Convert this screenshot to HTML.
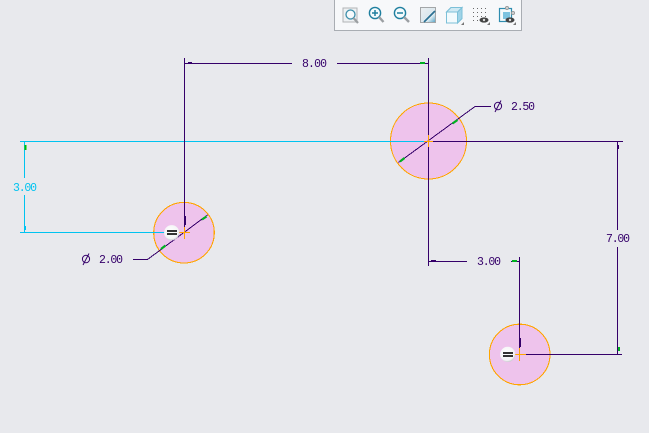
<!DOCTYPE html>
<html>
<head>
<meta charset="utf-8">
<style>
html,body{margin:0;padding:0;background:#e8e9ed;}
body{width:649px;height:433px;overflow:hidden;position:relative;}
svg{position:absolute;left:0;top:0;display:block;}
text{font-family:"Liberation Mono",monospace;font-size:11.5px;}
</style>
</head>
<body>
<svg width="649" height="433" viewBox="0 0 649 433" xmlns="http://www.w3.org/2000/svg">
<defs>
<linearGradient id="ds" x1="0" y1="0" x2="1" y2="1"><stop offset="0" stop-color="#eceff1"/><stop offset="0.5" stop-color="#dce8ee"/><stop offset="0.62" stop-color="#f4f8fa"/><stop offset="1" stop-color="#4f9fc2"/></linearGradient>
<radialGradient id="bd" cx="0.45" cy="0.4" r="0.65"><stop offset="0" stop-color="#ffffff"/><stop offset="0.75" stop-color="#f4f4f6"/><stop offset="1" stop-color="#b9b6c0"/></radialGradient>
</defs>

<!-- circles -->
<g fill="#eec3ec">
<circle cx="428.5" cy="141" r="38"/>
<circle cx="184" cy="232.7" r="30.3"/>
<circle cx="519.7" cy="354.5" r="30.3"/>
</g>
<g fill="none" stroke="#ffa500" stroke-width="1.1" shape-rendering="crispEdges">
<circle cx="428.5" cy="141" r="38"/>
<circle cx="184" cy="232.7" r="30.3"/>
<circle cx="519.7" cy="354.5" r="30.3"/>
</g>

<!-- cyan reference & dim -->
<g stroke="#00c3f0" stroke-width="1" shape-rendering="crispEdges" fill="none">
<path d="M20 141.5H426"/>
<path d="M20 232.5H166"/>
<path d="M24.5 142V178M24.5 195V232"/>
</g>
<rect x="24" y="226" width="2" height="4" fill="#00c3f0"/>
<rect x="24.5" y="145" width="2" height="5" fill="#00c000"/>

<!-- purple dims -->
<g stroke="#35006a" stroke-width="1" shape-rendering="crispEdges" fill="none">
<path d="M184.5 58V232"/>
<path d="M428.5 58V266"/>
<path d="M184 63.5H292M337 63.5H429"/>
<path d="M433 141.5H623"/>
<path d="M617.5 142V230M617.5 247V354"/>
<path d="M526 354.5H622"/>
<path d="M519.5 257V354"/>
<path d="M428 261.5H467M511 261.5H520"/>
<path d="M475 106.5H491"/>
<path d="M133 259.5H148"/>
<path d="M398.5 162.5L475 106.5"/>
<path d="M207.5 215L147.5 259.5"/>
</g>
<!-- thick ticks -->
<g fill="#35006a" shape-rendering="crispEdges">
<rect x="184" y="216" width="2" height="9"/>
<rect x="519" y="338" width="2" height="9"/>
<rect x="188" y="62" width="4" height="1"/>
<rect x="431" y="260" width="5" height="1"/>
<rect x="618" y="145" width="1" height="4"/>
</g>
<!-- green -->
<g fill="#00b020" shape-rendering="crispEdges">
<rect x="420" y="62" width="5" height="2"/>
<rect x="512" y="260" width="5" height="2"/>
<rect x="618" y="347" width="2" height="4"/>
</g>
<g stroke="#00b020" stroke-width="2.2" fill="none">
<path d="M452.5 123.5L457.5 120"/>
<path d="M400 161.5L404.5 158"/>
<path d="M202 219.5L206.5 216.5"/>
<path d="M161 249L165.5 245.5"/>
</g>

<!-- centre crosses -->
<g stroke="#ffa500" stroke-width="1" shape-rendering="crispEdges" fill="none">
<path d="M428.5 135V147M424 141.5H433"/>
<path d="M184.5 227V239M179 232.5H190"/>
<path d="M519.5 348V361M513 354.5H526"/>
</g>

<!-- badges -->
<circle cx="171.7" cy="232.7" r="7.6" fill="url(#bd)"/>
<circle cx="507.7" cy="354.4" r="7.6" fill="url(#bd)"/>
<g fill="#333" shape-rendering="crispEdges">
<rect x="167" y="230" width="10" height="2"/><rect x="167" y="233" width="10" height="2"/>
<rect x="503" y="352" width="10" height="2"/><rect x="503" y="355" width="10" height="2"/>
</g>

<!-- dimension text -->
<g fill="#35006a">
<text x="302" y="67" textLength="25">8.00</text>
<text x="477" y="265" textLength="24">3.00</text>
<text x="606" y="242" textLength="24">7.00</text>
<text x="511" y="110" textLength="24">2.50</text>
<text x="99" y="263" textLength="24">2.00</text>
</g>
<text x="13" y="191" textLength="24" fill="#00c3f0">3.00</text>
<g stroke="#35006a" stroke-width="1" fill="none">
<ellipse cx="498" cy="106" rx="3.6" ry="3.8"/><path d="M495 112L501 100.5"/>
<ellipse cx="86" cy="259" rx="3.6" ry="3.8"/><path d="M83 265L89 253.5"/>
</g>

<!-- toolbar -->
<rect x="334.5" y="-2" width="187" height="32.5" fill="#f7f8fa" stroke="#a9adb3"/>
<!-- zoom fit -->
<rect x="343" y="8" width="14" height="14" fill="#eef1f3" stroke="#b2b4b6"/>
<circle cx="350.5" cy="14.5" r="4.5" fill="#f6fafc" stroke="#3b8eaa" stroke-width="1.3"/>
<path d="M353.5 18L358 23" stroke="#9b9fa2" stroke-width="2.2"/>
<!-- zoom in -->
<circle cx="375" cy="13" r="5.6" fill="#f4fbfd" stroke="#1f7f9f" stroke-width="1.4"/>
<path d="M372 13H378M375 10V16" stroke="#1f7f9f" stroke-width="1.5"/>
<path d="M379 17L383.5 22" stroke="#9b9fa2" stroke-width="2.4"/>
<!-- zoom out -->
<circle cx="400" cy="13" r="5.6" fill="#f4fbfd" stroke="#1f7f9f" stroke-width="1.4"/>
<path d="M397 13H403" stroke="#1f7f9f" stroke-width="1.5"/>
<path d="M404 17L409 22" stroke="#9b9fa2" stroke-width="2.4"/>
<!-- display style -->
<rect x="420.5" y="7.5" width="15" height="15" fill="url(#ds)" stroke="#a3a6a8"/>
<path d="M424 22L435 11" stroke="#2a6f92" stroke-width="1.8"/>
<!-- cube -->
<path d="M446.5 12L451 7.5H462V18.5L457.5 23H446.5Z" fill="#f2fafd" stroke="#7cc0d8"/>
<path d="M457.5 12L462 7.5V18.5L457.5 23Z" fill="#9fd3e7" stroke="#7cc0d8"/>
<path d="M446.5 12L451 7.5H462L457.5 12Z" fill="#cfe9f3" stroke="#7cc0d8"/>
<path d="M461 25L464 25L464 22Z" fill="#777"/>
<!-- dots -->
<g fill="#6a6a6a" shape-rendering="crispEdges">
<rect x="473" y="8" width="1" height="1"/><rect x="477" y="8" width="1" height="1"/><rect x="481" y="8" width="1" height="1"/><rect x="485" y="8" width="1" height="1"/>
<rect x="473" y="12" width="1" height="1"/><rect x="477" y="12" width="1" height="1"/><rect x="481" y="12" width="1" height="1"/><rect x="485" y="12" width="1" height="1"/>
<rect x="473" y="16" width="1" height="1"/><rect x="477" y="16" width="1" height="1"/><rect x="481" y="16" width="1" height="1"/><rect x="485" y="16" width="1" height="1"/>
<rect x="473" y="20" width="1" height="1"/><rect x="477" y="20" width="1" height="1"/>
</g>
<ellipse cx="484" cy="20" rx="4.5" ry="2.6" fill="#444"/><circle cx="484" cy="20" r="1.2" fill="#ddd"/>
<path d="M487 25L490 25L490 22Z" fill="#777"/>
<!-- last icon -->
<rect x="499.5" y="8.5" width="12" height="13" fill="#f4fafc" stroke="#2f8db0" stroke-width="1.2"/>
<rect x="503" y="12" width="7" height="7" fill="#7cc3e0"/>
<circle cx="507" cy="8" r="1.5" fill="#ddd" stroke="#999"/>
<circle cx="513" cy="13" r="1.5" fill="#ddd" stroke="#999"/>
<ellipse cx="510" cy="20" rx="4.5" ry="2.6" fill="#444"/><circle cx="510" cy="20" r="1.2" fill="#ddd"/>
<path d="M513 25L516 25L516 22Z" fill="#777"/>
</svg>
</body>
</html>
